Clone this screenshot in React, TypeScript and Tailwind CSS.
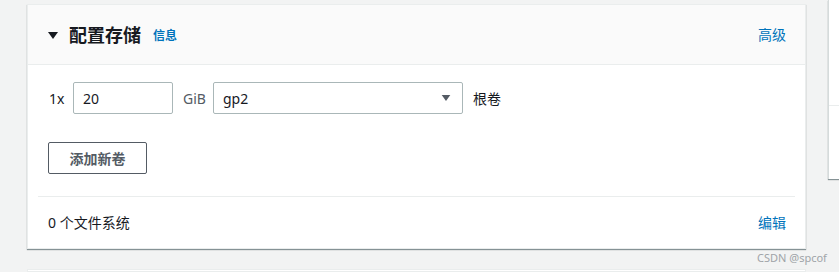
import React from "react";

const font = { fontFamily: '"Noto Sans", "Noto Sans CJK SC", sans-serif' };

const Caret = ({ className }: { className: string }) => (
  <svg viewBox="0 0 10 7" className={className}>
    <path d="M0 0 L10 0 L5 7 Z" fill="currentColor" />
  </svg>
);

const App = () => {
  return (
    <div
      className="relative flex h-[272px] w-[839px] overflow-hidden bg-[#f2f3f3] text-[14px] text-[#16191f]"
      style={font}
    >
      {/* main column */}
      <div className="flex w-[806px] shrink-0 flex-col pl-[27px] pt-[4px]">
        <div className="w-[779px] border border-[#eaeded] bg-white shadow-[0_1px_1px_0_rgba(0,28,36,0.45)]">
          {/* header */}
          <div className="flex h-[60px] items-center justify-between border-b border-[#eaeded] bg-[#fafafa] pl-[20px] pr-[19px]">
            <div className="flex items-center">
              <Caret className="mt-[1px] h-[7px] w-[10px] text-[#16191f]" />
              <span className="ml-[11px] text-[18px] font-bold leading-none">配置存储</span>
              <span className="ml-[12px] mt-[3px] text-[12px] font-bold text-[#0073bb]">信息</span>
            </div>
            <span className="text-[14px] text-[#0073bb]">高级</span>
          </div>

          {/* body */}
          <div className="px-[20px] pt-[17px]">
            <div className="flex items-center gap-[10px]">
              <span className="w-[15px] pl-[1px]">1x</span>
              <div className="flex h-[32px] w-[100px] items-center rounded-[2px] border border-[#aab7b8] px-[9px]">
                20
              </div>
              <span className="w-[20px] whitespace-nowrap text-[#545b64]">GiB</span>
              <div className="flex h-[32px] w-[250px] items-center justify-between rounded-[2px] border border-[#aab7b8] pl-[9px] pr-[11px]">
                <span>gp2</span>
                <Caret className="h-[6px] w-[10px] text-[#545b64]" />
              </div>
              <span>根卷</span>
            </div>
            <button className="mt-[28px] flex h-[32px] w-[99px] items-center justify-center rounded-[2px] border border-[#545b64] bg-white text-[14px] font-bold text-[#545b64]">
              添加新卷
            </button>
          </div>

          {/* footer */}
          <div className="mx-[10px] mt-[22px] flex h-[52px] items-center justify-between border-t border-[#eaeded] pl-[10px] pr-[9px]">
            <span>0 个文件系统</span>
            <span className="text-[#0073bb]">编辑</span>
          </div>
        </div>

        <div className="mt-[20px] h-[20px] w-[779px] border border-[#eaeded] bg-white" />
      </div>

      {/* right side panel */}
      <div className="ml-[22px] flex h-[179px] w-[20px] shrink-0 flex-col border-l border-[#d5dbdb] bg-white shadow-[0_1px_1px_0_rgba(0,28,36,0.45)]">
        <div className="h-[106px] border-b border-[#eaeded]" />
      </div>

      <span className="absolute left-[757px] top-[250px] text-[11px] text-[#a0a4a8]">CSDN @spcof</span>
    </div>
  );
};

export default App;
